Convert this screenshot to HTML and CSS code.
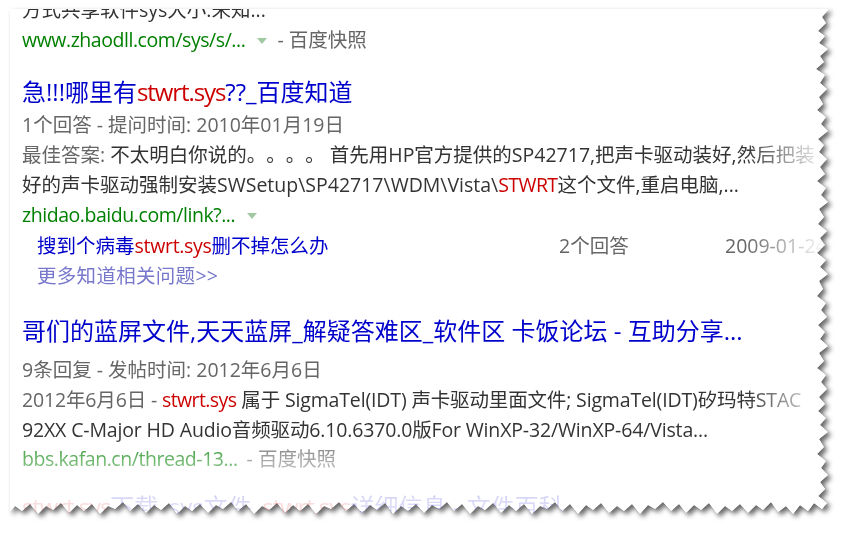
FILE: index.html
```html
<!DOCTYPE html>
<html lang="zh-CN">
<head>
<meta charset="utf-8">
<title>stwrt.sys - 百度搜索</title>
<link rel="stylesheet" href="styles.css">
</head>
<body>
<div class="sheet">
  <div class="paper">
    <div class="content">
      <div class="result r1">
        <div class="line abs">方式共享软件sys大小:未知...</div>
        <div class="line url"><span class="host">www.zhaodll.com/sys/s/...</span><i class="tri"></i><span class="snap">- 百度快照</span></div>
      </div>

      <div class="result r2">
        <h3 class="title"><a href="#">急!!!哪里有<em>stwrt.sys</em>??_百度知道</a></h3>
        <div class="line meta">1个回答 - 提问时间: 2010年01月19日</div>
        <div class="line abs"><span class="lbl">最佳答案:</span> 不太明白你说的。。。。 首先用HP官方提供的SP42717,把声卡驱动装好,然后把装</div>
        <div class="line abs">好的声卡驱动强制安装SWSetup\SP42717\WDM\Vista\<em>STWRT</em>这个文件,重启电脑,...</div>
        <div class="line url"><span class="host">zhidao.baidu.com/link?...</span><i class="tri"></i></div>
        <div class="related">
          <a href="#" class="q">搜到个病毒<em>stwrt.sys</em>删不掉怎么办</a>
          <span class="cnt">2个回答</span>
          <span class="date">2009-01-24</span>
        </div>
        <div class="line more"><a href="#">更多知道相关问题&gt;&gt;</a></div>
      </div>

      <div class="result r3">
        <h3 class="title"><a href="#">哥们的蓝屏文件,天天蓝屏_解疑答难区_软件区 卡饭论坛 - 互助分享...</a></h3>
        <div class="line meta">9条回复 - 发帖时间: 2012年6月6日</div>
        <div class="line abs"><span class="lbl">2012年6月6日 - </span><em>stwrt.sys</em> 属于 SigmaTel(IDT) 声卡驱动里面文件; SigmaTel(IDT)矽玛特STAC</div>
        <div class="line abs">92XX C-Major HD Audio音频驱动6.10.6370.0版For WinXP-32/WinXP-64/Vista...</div>
        <div class="line url"><span class="host">bbs.kafan.cn/thread-13...</span><span class="snap sp">- 百度快照</span></div>
      </div>

      <div class="result r4">
        <h3 class="title"><a href="#"><em>stwrt.sys</em>下载_sys文件_<em>stwrt.sys</em>详细信息 - 文件百科</a></h3>
      </div>
    </div>
    <div class="fade"></div>
  </div>
</div>
</body>
</html>
```

FILE: styles.css
```css
html, body {
  margin: 0;
  padding: 0;
  background: #fff;
}

body {
  width: 845px;
  height: 535px;
  overflow: hidden;
  font-family: "Open Sans", "Noto Sans CJK SC", sans-serif;
  text-spacing-trim: space-all;
}

.sheet {
  margin: 9px 0 0 10px;
  width: 822px;
  height: 514px;
  filter: drop-shadow(0 0 0.6px rgba(0, 0, 0, 0.35)) drop-shadow(3px 3px 2.5px rgba(0, 0, 0, 0.6));
}

.paper {
  position: relative;
  width: 822px;
  height: 514px;
  background: #fff;
  overflow: hidden;
  clip-path: polygon(
    0 0, 819px 0,
    812px 8px, 816px 14px, 808px 22px, 815px 27px, 809px 34px, 818px 40px, 810px 47px, 814px 53px,
    806px 60px, 815px 66px, 810px 74px, 817px 80px, 809px 88px, 813px 95px, 807px 101px, 816px 108px,
    811px 115px, 818px 122px, 808px 130px, 814px 136px, 809px 143px, 817px 150px, 810px 158px, 815px 165px,
    807px 172px, 816px 179px, 811px 186px, 818px 193px, 809px 200px, 814px 208px, 808px 215px, 817px 222px,
    810px 229px, 815px 236px, 807px 244px, 816px 251px, 810px 258px, 818px 265px, 809px 272px, 813px 280px,
    807px 287px, 816px 294px, 811px 301px, 817px 308px, 808px 316px, 815px 323px, 810px 330px, 818px 337px,
    809px 344px, 814px 352px, 807px 359px, 816px 366px, 811px 373px, 817px 380px, 809px 388px, 815px 395px,
    808px 402px, 816px 409px, 810px 416px, 818px 423px, 809px 430px, 814px 438px, 807px 445px, 816px 452px,
    811px 459px, 818px 466px, 810px 473px, 815px 480px, 808px 487px, 817px 494px,
    812px 500px, 804px 494px, 798px 502px, 790px 496px, 783px 505px, 776px 497px, 768px 503px, 761px 493px,
    753px 501px, 746px 496px, 738px 504px, 730px 495px, 722px 502px, 715px 497px, 707px 505px, 699px 494px,
    691px 501px, 684px 496px, 676px 504px, 669px 495px, 661px 502px, 653px 493px, 645px 500px, 638px 496px,
    630px 505px, 622px 495px, 614px 502px, 607px 497px, 599px 504px, 591px 494px, 583px 501px, 576px 496px,
    568px 505px, 560px 495px, 552px 502px, 545px 493px, 537px 500px, 530px 497px, 522px 505px, 514px 495px,
    506px 502px, 499px 496px, 491px 504px, 483px 494px, 475px 501px, 468px 497px, 460px 505px, 452px 495px,
    444px 502px, 437px 493px, 429px 500px, 422px 496px, 414px 504px, 406px 495px, 398px 502px, 391px 497px,
    383px 505px, 375px 494px, 367px 501px, 360px 496px, 352px 504px, 344px 495px, 336px 502px, 329px 493px,
    321px 500px, 314px 497px, 306px 505px, 298px 495px, 290px 502px, 283px 496px, 275px 504px, 267px 494px,
    259px 501px, 252px 497px, 244px 505px, 236px 495px, 228px 502px, 221px 493px, 213px 500px, 206px 496px,
    198px 504px, 190px 495px, 182px 502px, 175px 497px, 167px 505px, 159px 494px, 151px 501px, 144px 496px,
    136px 504px, 128px 495px, 120px 502px, 113px 493px, 105px 500px, 98px 497px, 90px 505px, 82px 495px,
    74px 502px, 67px 496px, 59px 504px, 51px 494px, 43px 501px, 36px 497px, 28px 505px, 20px 495px,
    12px 502px, 5px 497px, 0 503px
  );
}

.content {
  margin-top: -14px;
  padding-left: 12px;
  white-space: nowrap;
  font-size: 19.5px;
  line-height: 30px;
  color: #333;
}

.line {
  height: 30px;
}

em {
  font-style: normal;
  color: #c00;
}

a {
  text-decoration: none;
}

.url {
  display: flex;
  align-items: center;
}

.host {
  color: #008000;
  letter-spacing: -0.45px;
}

.tri {
  display: block;
  width: 0;
  height: 0;
  margin: 2px 10px 0 12px;
  border-left: 5px solid transparent;
  border-right: 5px solid transparent;
  border-top: 6px solid #a3c9a3;
}

.snap {
  color: #666;
}

.snap.sp {
  margin-left: 9px;
}

.title {
  margin: 0;
  font-weight: normal;
  font-size: 24px;
  line-height: 30px;
  height: 30px;
}

.title a {
  color: #00c;
}

.title em {
  letter-spacing: -1.1px;
}

.abs em {
  letter-spacing: -0.6px;
}

.meta {
  color: #666;
}

.lbl {
  color: #666;
}

.r2 .title {
  margin-top: 22px;
  margin-bottom: 3px;
}

.related {
  display: grid;
  grid-template-columns: 522px 166px auto;
  height: 30px;
  margin-top: 1px;
  padding-left: 15px;
}

.related .q {
  color: #00c;
}

.related .q em {
  letter-spacing: -0.3px;
}

.related .cnt,
.related .date {
  color: #666;
}

.more {
  padding-left: 15px;
}

.more a {
  color: #77c;
  letter-spacing: 0.3px;
}

.r3 .title {
  margin-top: 25px;
  margin-bottom: 9px;
}

.r3 .abs {
  letter-spacing: -0.15px;
}

.r3 .url {
  margin-top: -1px;
}

.r4 .title {
  margin-top: 18px;
}

.fade {
  position: absolute;
  inset: 0;
  pointer-events: none;
  background:
    linear-gradient(to right, rgba(255, 255, 255, 0) 735px, rgba(255, 255, 255, 0.55) 780px, rgba(255, 255, 255, 0.95) 812px),
    linear-gradient(to bottom, rgba(255, 255, 255, 0) 425px, rgba(255, 255, 255, 0.45) 452px, rgba(255, 255, 255, 0.85) 490px, rgba(255, 255, 255, 0.9) 514px);
}
```
